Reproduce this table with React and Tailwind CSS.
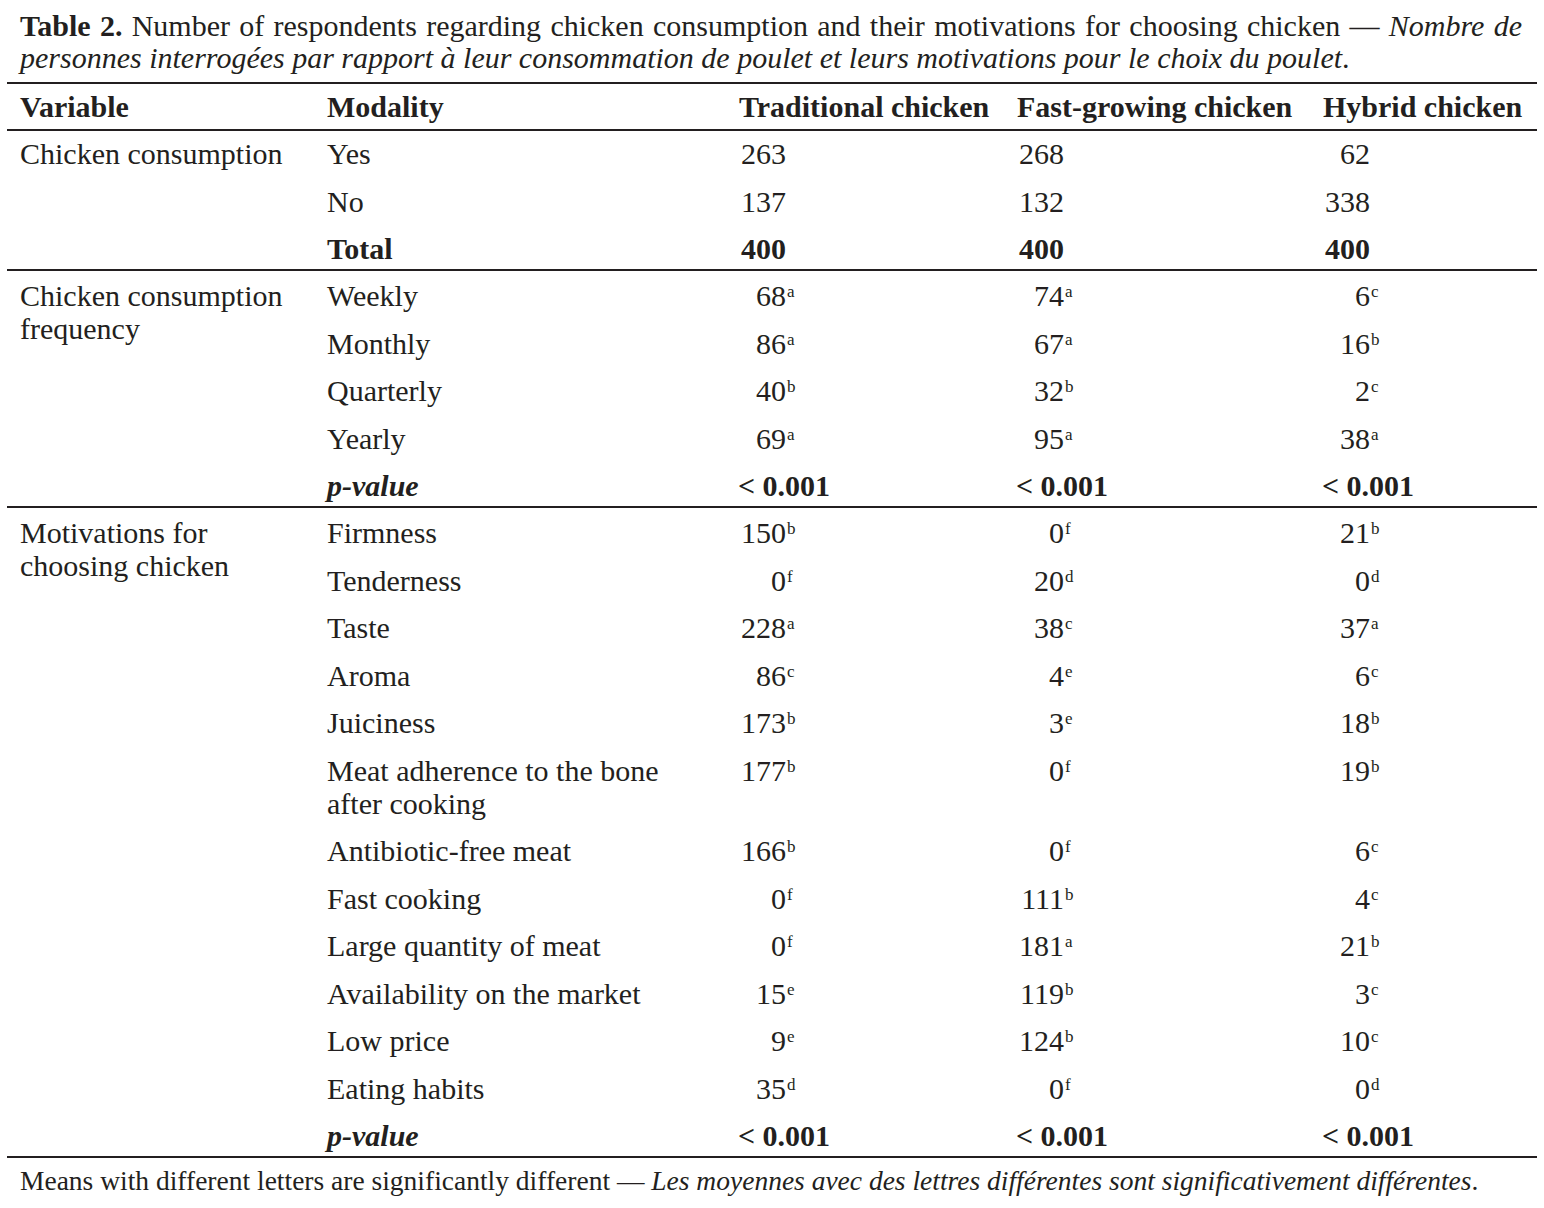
import React from "react";

const sections = [
  {
    label: ["Chicken consumption"],
    rows: [
      { name: "Yes", vals: [["263"], ["268"], ["62"]] },
      { name: "No", vals: [["137"], ["132"], ["338"]] },
      { name: "Total", bold: true, vals: [["400"], ["400"], ["400"]] },
    ],
  },
  {
    label: ["Chicken consumption", "frequency"],
    rows: [
      { name: "Weekly", vals: [["68", "a"], ["74", "a"], ["6", "c"]] },
      { name: "Monthly", vals: [["86", "a"], ["67", "a"], ["16", "b"]] },
      { name: "Quarterly", vals: [["40", "b"], ["32", "b"], ["2", "c"]] },
      { name: "Yearly", vals: [["69", "a"], ["95", "a"], ["38", "a"]] },
      { name: "p-value", pvalue: true },
    ],
  },
  {
    label: ["Motivations for", "choosing chicken"],
    rows: [
      { name: "Firmness", vals: [["150", "b"], ["0", "f"], ["21", "b"]] },
      { name: "Tenderness", vals: [["0", "f"], ["20", "d"], ["0", "d"]] },
      { name: "Taste", vals: [["228", "a"], ["38", "c"], ["37", "a"]] },
      { name: "Aroma", vals: [["86", "c"], ["4", "e"], ["6", "c"]] },
      { name: "Juiciness", vals: [["173", "b"], ["3", "e"], ["18", "b"]] },
      {
        name: ["Meat adherence to the bone", "after cooking"],
        vals: [["177", "b"], ["0", "f"], ["19", "b"]],
      },
      { name: "Antibiotic-free meat", vals: [["166", "b"], ["0", "f"], ["6", "c"]] },
      { name: "Fast cooking", vals: [["0", "f"], ["111", "b"], ["4", "c"]] },
      { name: "Large quantity of meat", vals: [["0", "f"], ["181", "a"], ["21", "b"]] },
      { name: "Availability on the market", vals: [["15", "e"], ["119", "b"], ["3", "c"]] },
      { name: "Low price", vals: [["9", "e"], ["124", "b"], ["10", "c"]] },
      { name: "Eating habits", vals: [["35", "d"], ["0", "f"], ["0", "d"]] },
      { name: "p-value", pvalue: true },
    ],
  },
];

const Value = ({ v, bold }) => (
  <span className={`inline-flex ${bold ? "font-bold" : ""}`}>
    <span className="w-[47px] text-right">{v[0]}</span>
    {v[1] && (
      <span className="text-[17px] leading-none pt-[4px] pl-[1px]">{v[1]}</span>
    )}
  </span>
);

export default function App() {
  return (
    <div className="w-[1544px] min-h-[1208px] bg-white text-[#231f20] font-['Liberation_Serif',serif] text-[30px] leading-[33px]">
      <div className="pt-[10px] pl-[20px] pr-[22px] text-justify leading-[32px]">
        <b>Table 2.</b> Number of respondents regarding chicken consumption and their
        motivations for choosing chicken —{" "}
        <i>
          Nombre de personnes interrogées par rapport à leur consommation de poulet et leurs
          motivations pour le choix du poulet
        </i>
        .
      </div>

      <table className="mt-[8px] ml-[7px] w-[1530px] table-fixed border-collapse">
        <colgroup>
          <col className="w-[320px]" />
          <col className="w-[412px]" />
          <col className="w-[278px]" />
          <col className="w-[306px]" />
          <col className="w-[214px]" />
        </colgroup>
        <thead>
          <tr className="border-y-2 border-[#231f20] text-left">
            <th className="pt-[6px] pb-[6px] pl-[13px] font-bold">Variable</th>
            <th className="pt-[6px] pb-[6px] font-bold">Modality</th>
            <th className="pt-[6px] pb-[6px] font-bold">Traditional chicken</th>
            <th className="pt-[6px] pb-[6px] font-bold">Fast-growing chicken</th>
            <th className="pt-[6px] pb-[6px] font-bold">Hybrid chicken</th>
          </tr>
        </thead>
        {sections.map((s, si) => (
          <tbody key={si} className="border-b-2 border-[#231f20]">
            {s.rows.map((r, ri) => {
              const last = ri === s.rows.length - 1;
              // first row of each block sits a touch lower, as in the print
              const top = ri !== 0 ? "pt-[7px]" : si === 0 ? "pt-[6px]" : "pt-[8px]";
              const cell = `${top} align-top ${last ? "pb-[4px]" : "pb-[7.5px]"}`;
              return (
                <tr key={ri}>
                  {ri === 0 && (
                    <td rowSpan={s.rows.length} className={`${top} pl-[13px] align-top`}>
                      {s.label.map((l, i) => (
                        <div key={i}>{l}</div>
                      ))}
                    </td>
                  )}
                  <td className={`${cell} ${r.bold ? "font-bold" : ""}`}>
                    {r.pvalue ? (
                      <b className="italic">p-value</b>
                    ) : Array.isArray(r.name) ? (
                      r.name.map((n, i) => <div key={i}>{n}</div>)
                    ) : (
                      r.name
                    )}
                  </td>
                  {[0, 1, 2].map((c) => (
                    <td key={c} className={cell}>
                      {r.pvalue ? (
                        <b className="-ml-[1px]">&lt; 0.001</b>
                      ) : (
                        <Value v={r.vals[c]} bold={r.bold} />
                      )}
                    </td>
                  ))}
                </tr>
              );
            })}
          </tbody>
        ))}
      </table>

      <div className="pt-[7px] pl-[20px] text-[27.5px] leading-[32px]">
        Means with different letters are significantly different —{" "}
        <i>Les moyennes avec des lettres différentes sont significativement différentes</i>.
      </div>
    </div>
  );
}
